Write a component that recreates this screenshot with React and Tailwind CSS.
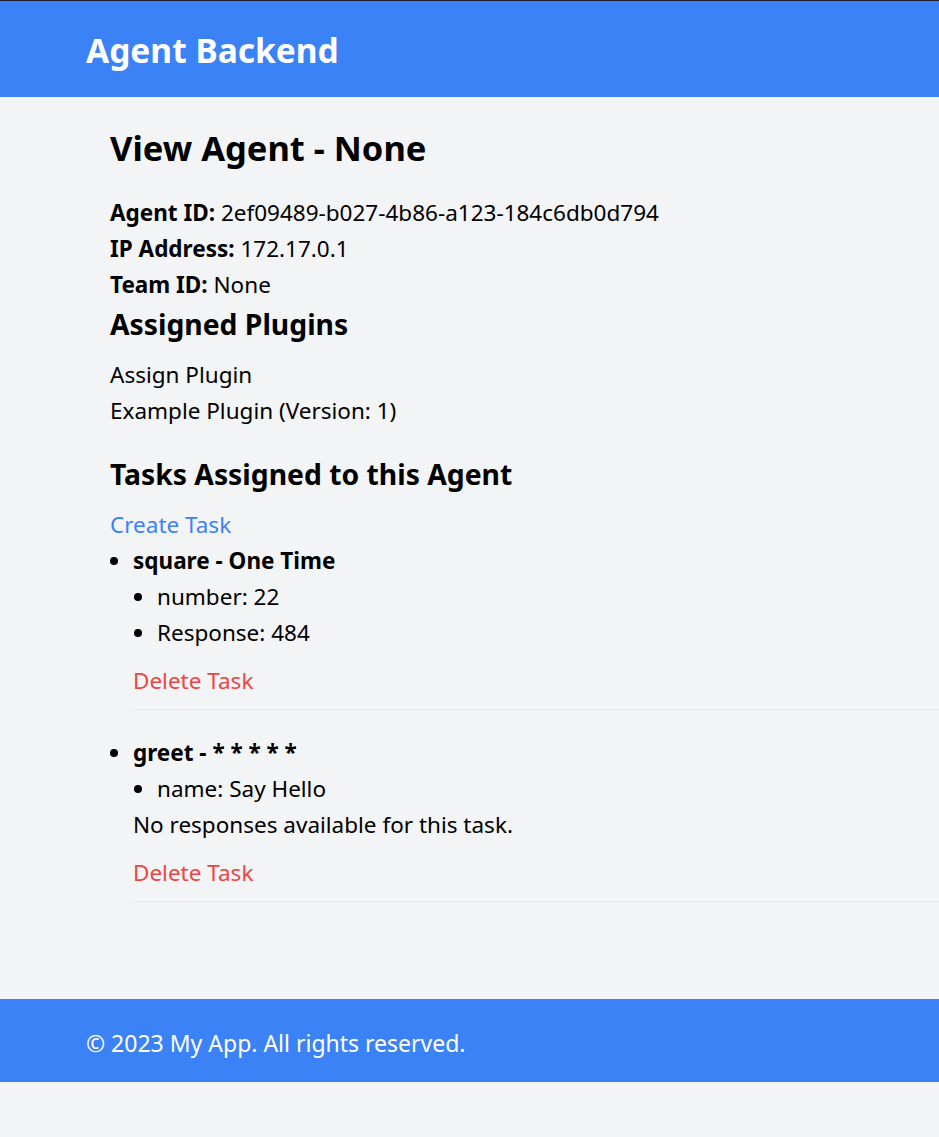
import React from "react";

const tasks = [
  {
    id: 1,
    name: "square",
    schedule: "One Time",
    params: [{ key: "number", value: "22" }],
    responses: ["484"],
  },
  {
    id: 2,
    name: "greet",
    schedule: "* * * * *",
    params: [{ key: "name", value: "Say Hello" }],
    responses: [],
  },
];

const InfoRow = ({ label, value }) => (
  <p className="leading-[36px]">
    <span className="font-bold">{label}:</span> {value}
  </p>
);

const TaskItem = ({ task }) => (
  <li className="pb-[25px]">
    <p className="font-bold leading-[36px]">
      {task.name} - {task.schedule}
    </p>
    <ul className="list-disc pl-[24px]">
      {task.params.map((p) => (
        <li key={p.key} className="leading-[36px]">
          {p.key}: {p.value}
        </li>
      ))}
      {task.responses.map((r, i) => (
        <li key={i} className="leading-[36px]">
          Response: {r}
        </li>
      ))}
    </ul>
    {task.responses.length === 0 && (
      <p className="leading-[36px]">No responses available for this task.</p>
    )}
    <div className="mt-[12px] border-b border-[#e5e7eb] pb-[10px]">
      <button className="text-[#ef4444] leading-[36px]">Delete Task</button>
    </div>
  </li>
);

export default function App() {
  return (
    <div
      className="min-h-[1137px] bg-[#f3f4f6] text-black text-[22.5px] flex flex-col"
      style={{ fontFamily: '"Noto Sans", "Open Sans", sans-serif' }}
    >
      <header className="h-[97px] border-t border-[#1e1e28] bg-[#3b82f6] flex items-center pl-[86px] pt-[4px]">
        <h1 className="text-[33.5px] font-bold text-white leading-none">Agent Backend</h1>
      </header>

      <main className="pl-[110px] pt-[27px] h-[902px] overflow-hidden">
        <h1 className="text-[34.5px] font-bold leading-[48px] mb-[23px]">View Agent - None</h1>
        <InfoRow label="Agent ID" value="2ef09489-b027-4b86-a123-184c6db0d794" />
        <InfoRow label="IP Address" value="172.17.0.1" />
        <InfoRow label="Team ID" value="None" />

        <h2 className="text-[28.3px] font-bold leading-[40px] mt-[1px]">Assigned Plugins</h2>
        <div className="mt-[13px]">
          <p className="leading-[36px]">Assign Plugin</p>
          <p className="leading-[36px]">Example Plugin (Version: 1)</p>
        </div>

        <h2 className="text-[28.3px] font-bold leading-[40px] mt-[25px]">
          Tasks Assigned to this Agent
        </h2>
        <a href="#" className="block mt-[13px] text-[#3b82f6] leading-[36px]">
          Create Task
        </a>
        <ul className="list-disc pl-[23px]">
          {tasks.map((t) => (
            <TaskItem key={t.id} task={t} />
          ))}
        </ul>
      </main>

      <footer className="h-[83px] bg-[#3b82f6] flex items-center pl-[86px] pt-[5px]">
        <p className="text-white text-[23px]">© 2023 My App. All rights reserved.</p>
      </footer>
    </div>
  );
}
